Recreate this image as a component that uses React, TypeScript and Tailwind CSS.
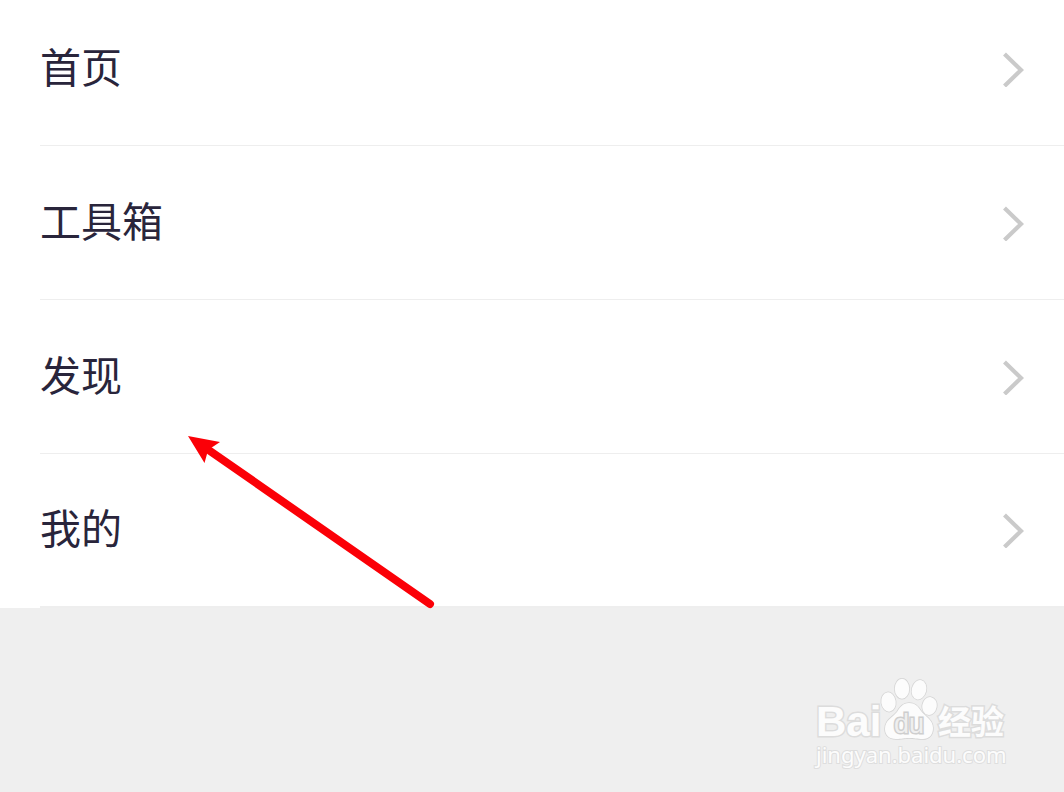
const items = [
  { label: "首页", href: "#home", row: "h-[146px] pb-2 border-b" },
  { label: "工具箱", href: "#toolbox", row: "h-[154px] border-b" },
  { label: "发现", href: "#discover", row: "h-[154px] border-b" },
  { label: "我的", href: "#mine", row: "h-[154px] border-b-2" },
];

function Chevron() {
  return (
    <svg className="h-9 w-6 shrink-0" viewBox="0 0 24 36" fill="none" aria-hidden="true">
      <path d="M4.500 3 21 19 4.500 35" stroke="#cacaca" strokeWidth="4.2" />
    </svg>
  );
}

function Arrow() {
  return (
    <svg
      className="pointer-events-none absolute top-[434px] left-[186px] h-[176px] w-[250px]"
      viewBox="0 0 250 176"
      aria-hidden="true"
    >
      <path d="M24 17 244 170" stroke="#fb0007" strokeWidth="8" strokeLinecap="round" />
      <path d="M2 2 34 8 25 14 21 20 18.500 29Z" fill="#fb0007" />
    </svg>
  );
}

function Paw() {
  return (
    <svg className="h-[64px] w-[58px] shrink-0" viewBox="0 0 58 64" aria-hidden="true">
      <g fill="#fcfcfc" stroke="#d4d4d4" strokeWidth="1.500">
        <ellipse cx="8.500" cy="24" rx="7.200" ry="9.700" transform="rotate(-8 8.500 24)" />
        <ellipse cx="22" cy="10.800" rx="7.200" ry="10" />
        <ellipse cx="39" cy="11.800" rx="7.200" ry="9.800" transform="rotate(14 39 11.800)" />
        <ellipse cx="49.500" cy="28" rx="7.200" ry="9" transform="rotate(10 49.500 28)" />
        <path d="M29 25C23 25 20 29 17 34C12 40 5 42 5 51C5 57 9 61 16 61C22 61 24 60 29 60C34 60 37 61 43 61C49 61 53 57 53 50C53 42 46 39 41 33C38 28 35 25 29 25Z" />
      </g>
    </svg>
  );
}

function Watermark() {
  return (
    <div className="absolute right-[56px] bottom-[20px] w-[192px] pb-[6px] text-[#fcfcfc] [paint-order:stroke_fill] [-webkit-text-stroke:3px_#dcdcdc]">
      <div className="flex h-[64px] items-end">
        <span className="w-[64px] font-['Liberation_Sans',sans-serif] text-[42px] leading-[40px] font-bold">Bai</span>
        <span className="relative block">
          <Paw />
          <span className="absolute inset-x-0 bottom-[2px] text-center font-['Liberation_Sans',sans-serif] text-[27px] leading-[32px] text-[#efefef] [-webkit-text-stroke:3px_#cecece]">
            du
          </span>
        </span>
        <span className="font-['Noto_Sans_CJK_SC',sans-serif] text-[33px] leading-[44px] font-bold whitespace-nowrap">经验</span>
      </div>
      <div className="font-['Noto_Sans',sans-serif] text-[22px] leading-[24px] [-webkit-text-stroke:2px_#dedede]">jingyan.baidu.com</div>
    </div>
  );
}

export default function App() {
  return (
    <main className="relative min-h-screen overflow-hidden bg-[#efefef] font-['Noto_Sans_CJK_SC',sans-serif]">
      <nav>
        <ul className="bg-white">
          {items.map(({ label, href, row }) => (
            <li key={label} className="pl-10">
              <a
                href={href}
                className={`flex items-center justify-between border-[#eeeeee] pr-10 text-[41px] leading-[60px] text-[#29253b] ${row}`}
              >
                <span className="pb-2">{label}</span>
                <Chevron />
              </a>
            </li>
          ))}
        </ul>
      </nav>
      <Arrow />
      <Watermark />
    </main>
  );
}
